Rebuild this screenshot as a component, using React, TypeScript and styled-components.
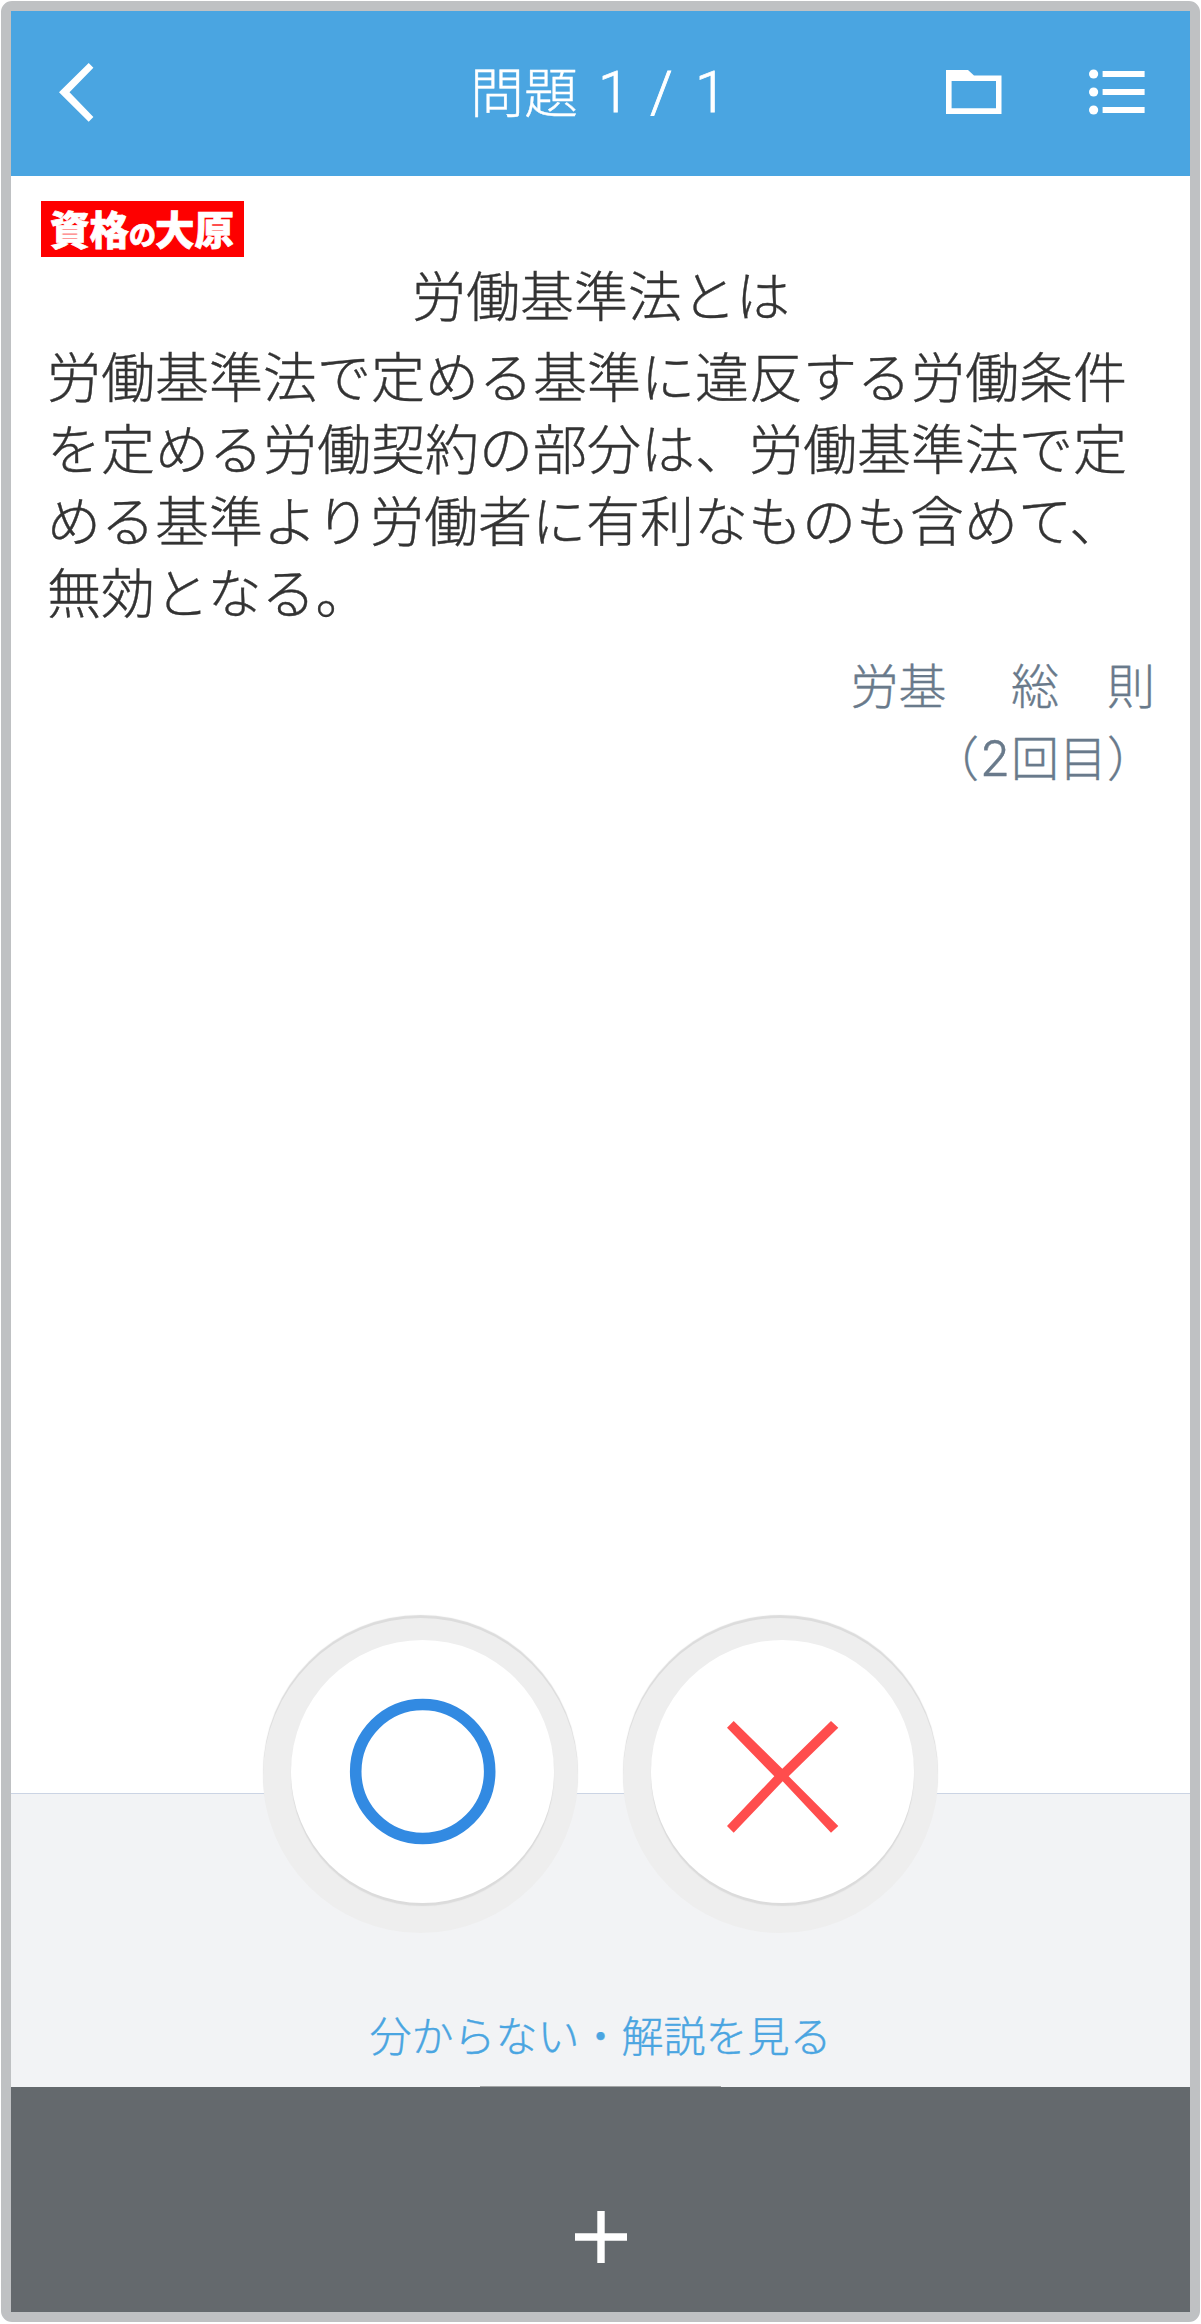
import React from 'react';
import styled, { createGlobalStyle } from 'styled-components';

const GlobalStyle = createGlobalStyle`
  *, *::before, *::after { box-sizing: border-box; }
  body {
    margin: 0;
    background: #fff;
    font-family: "Noto Sans CJK JP", "Liberation Sans", sans-serif;
    font-weight: 300;
    -webkit-text-stroke: 0.4px currentColor;
  }
  button { font: inherit; border: 0; padding: 0; margin: 0; background: none; cursor: pointer; }
  svg { display: block; }
`;

const Page = styled.div`
  width: 1201px;
  height: 2324px;
  padding: 1px;
`;

const Device = styled.div`
  width: 1199px;
  height: 2321px;
  border: 10px solid #bfc1c3;
  border-radius: 11px;
  display: flex;
  flex-direction: column;
`;

const Header = styled.header`
  flex: none;
  height: 165px;
  padding-bottom: 2px;
  background: #4aa5e1;
  color: #fff;
  display: grid;
  grid-template-columns: 459px 1fr 256px;
  align-items: center;
`;

const BackButton = styled.button`
  justify-self: start;
  margin-left: 48px;
`;

const Counter = styled.h1`
  margin: 0;
  display: flex;
  align-items: center;
  font-size: 54px;
  line-height: 80px;
  font-weight: 300;
  white-space: pre;
`;

const CounterLabel = styled.span`
  padding-bottom: 6px;
`;

const Numeral = styled.span<{ $start: number }>`
  margin-left: ${(p) => p.$start}px;
  font-family: Roboto, "Liberation Sans", sans-serif;
  font-size: 57px;
  font-weight: 300;
  -webkit-text-stroke: 0.8px currentColor;
  width: 32px;
`;

const Actions = styled.div`
  display: flex;
  align-items: center;
  gap: 87px;
  padding: 0 0 1px 12px;
`;

const Question = styled.main`
  flex: none;
  height: 1617px;
  background: #fff;
  color: #333;
  padding: 25px 35px 0 30px;
  display: flex;
  flex-direction: column;
`;

const Brand = styled.div`
  width: 203px;
  height: 56px;
  padding-left: 9px;
  background: #fe0000;
  color: #fff;
  display: flex;
  align-items: baseline;
  font-size: 39.5px;
  line-height: 53px;
  font-weight: 900;
  -webkit-text-stroke: 0.7px #fff;
`;

const BrandParticle = styled.span`
  font-size: 27px;
  width: 26px;
`;

const Title = styled.h2`
  margin: 1px 0 0;
  padding-left: 6px;
  height: 72px;
  font-size: 54px;
  line-height: 72px;
  font-weight: 300;
  text-align: center;
`;

const Body = styled.p`
  margin: 9px 0 0 6px;
  width: 1082px;
  font-size: 54px;
  line-height: 72px;
`;

const Meta = styled.div`
  margin-top: 20px;
  font-size: 48px;
  line-height: 72px;
  color: #697a8b;
  text-align: right;
  white-space: pre;
`;

const MetaLine = styled.div`
  height: 72px;
`;

const Subject = styled.span`
  margin-right: 6px;
`;

const Round = styled.span`
  display: inline-block;
  width: 32px;
  text-align: center;
  font-family: Inter, "Liberation Sans", sans-serif;
  font-weight: 300;
  font-size: 49px;
`;

const AnswerPanel = styled.section`
  flex: none;
  height: 294px;
  border-top: 1px solid #cbd4e4;
  background: #f2f3f5;
  display: flex;
  flex-direction: column;
  align-items: center;
`;

const Answers = styled.div`
  display: flex;
  gap: 45px;
  margin-top: -176px;
`;

const AnswerRing = styled.button`
  width: 315px;
  height: 315px;
  border-radius: 50%;
  display: flex;
  align-items: flex-start;
  padding: 22px 0 0 28px;
  background: #eeeeee;
  box-shadow: 0 -3px 1px #dcdcdc;
`;

const AnswerFace = styled.span`
  width: 263px;
  height: 263px;
  border-radius: 50%;
  background: #fff;
  box-shadow: 0 3px 1px #dbdbdb;
  display: flex;
  align-items: center;
  justify-content: center;
`;

const SkipLink = styled.button`
  margin-top: 69px;
  color: #4aa5e1;
  font-size: 42px;
  line-height: 64px;
`;

const Handle = styled.div`
  width: 241px;
  height: 1px;
  margin-top: auto;
  background: #a3a5a6;
`;

const Footer = styled.footer`
  flex: 1;
  background: #64696d;
  display: flex;
  justify-content: center;
  align-items: flex-start;
  padding-top: 124px;
`;

const BackIcon = () => (
  <svg width="35" height="59" viewBox="0 0 35 59" fill="#fff">
    <path d="M29.7 0L34.4 4.7L10.5 29.3L34.4 54L29.7 58.7L0 29.3Z" />
  </svg>
);

const FolderIcon = () => (
  <svg width="56" height="44" viewBox="0 0 56 44" fill="#fff" fillRule="evenodd">
    <path d="M0 0H22L28 5.5H55.5V44H0ZM5.6 11V38.3H50V11Z" />
  </svg>
);

const ListIcon = () => (
  <svg width="56" height="46" viewBox="0 0 56 46" fill="#fff">
    {[5, 23, 41].map((y) => (
      <React.Fragment key={y}>
        <circle cx="4.6" cy={y} r="4.6" />
        <rect x="13.6" y={y - 3} width="42" height="6" />
      </React.Fragment>
    ))}
  </svg>
);

const CircleMark = () => (
  <svg width="147" height="147" viewBox="0 0 147 147" fill="none">
    <circle cx="73.7" cy="73.5" r="67" stroke="#328ae2" strokeWidth="11.6" />
  </svg>
);

const CrossMark = () => (
  <svg width="112" height="122" viewBox="0 0 112 122" fill="#ff4d4d">
    <path d="M0 16.7L47.3 65.3L0 115L6.7 121.7L55.7 70.3L104 121.7L111.3 115L61.7 65.3L111.3 16.7L104 10L55.3 57.7L6.7 10Z" />
  </svg>
);

const PlusIcon = () => (
  <svg width="52" height="52" viewBox="0 0 52 52" fill="#fff">
    <path d="M22.3 0H29.7V22.3H52V29.7H29.7V52H22.3V29.7H0V22.3H22.3Z" />
  </svg>
);

const bodyLines = [
  '労働基準法で定める基準に違反する労働条件',
  'を定める労働契約の部分は、労働基準法で定',
  'める基準より労働者に有利なものも含めて、',
  '無効となる。',
];

export default function App() {
  return (
    <>
      <GlobalStyle />
      <Page lang="ja">
        <Device>
          <Header>
            <BackButton aria-label="戻る"><BackIcon /></BackButton>
            <Counter>
              <CounterLabel>問題</CounterLabel>
              <Numeral $start={20}>1</Numeral>
              <Numeral $start={20}>/</Numeral>
              <Numeral $start={13}>1</Numeral>
            </Counter>
            <Actions>
              <button aria-label="フォルダ"><FolderIcon /></button>
              <button aria-label="一覧"><ListIcon /></button>
            </Actions>
          </Header>
          <Question>
            <Brand>資格<BrandParticle>の</BrandParticle>大原</Brand>
            <Title>労働基準法とは</Title>
            <Body>
              {bodyLines.map((line) => (
                <React.Fragment key={line}>{line}<br /></React.Fragment>
              ))}
            </Body>
            <Meta>
              <MetaLine><Subject>労基</Subject>{'　 総　則'}</MetaLine>
              <MetaLine>（<Round>2</Round>回目）</MetaLine>
            </Meta>
          </Question>
          <AnswerPanel>
            <Answers>
              <AnswerRing aria-label="正しい"><AnswerFace><CircleMark /></AnswerFace></AnswerRing>
              <AnswerRing aria-label="誤り"><AnswerFace><CrossMark /></AnswerFace></AnswerRing>
            </Answers>
            <SkipLink>分からない・解説を見る</SkipLink>
            <Handle />
          </AnswerPanel>
          <Footer>
            <button aria-label="追加"><PlusIcon /></button>
          </Footer>
        </Device>
      </Page>
    </>
  );
}
